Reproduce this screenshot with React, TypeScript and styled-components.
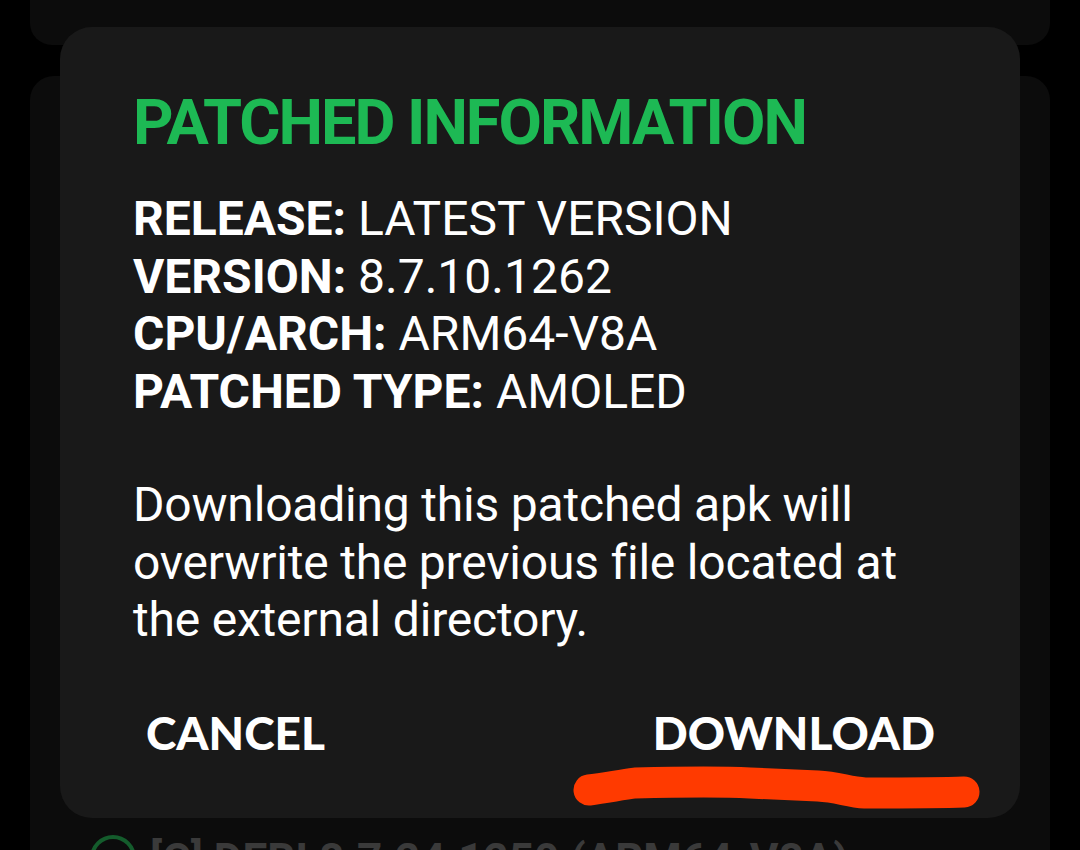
import React from "react";
import styled, { createGlobalStyle } from "styled-components";

const Global = createGlobalStyle`
  html, body { margin: 0; padding: 0; background: #000; }
  body { font-family: Roboto, "Noto Sans", sans-serif; }
`;

const Page = styled.div`
  position: relative;
  width: 1080px;
  height: 850px;
  overflow: hidden;
  background: #000;
  display: flex;
  flex-direction: column;
  gap: 31px;
  padding: 0 30px;
  box-sizing: border-box;
`;

const TopCard = styled.div`
  height: 45px;
  flex: none;
  background: #0c0c0c;
  border-radius: 0 0 22px 22px;
`;

const ListCard = styled.div`
  flex: 1;
  background: #0c0c0c;
  border-radius: 24px 24px 0 0;
  padding: 759px 0 0 60px;
`;

const ListRow = styled.div`
  display: flex;
  align-items: flex-start;
  gap: 14px;
`;

const RingIcon = styled.div`
  width: 38px;
  height: 38px;
  border: 4px solid #145c2c;
  border-radius: 50%;
  flex: none;
`;

const ListText = styled.div`
  font-family: Roboto, sans-serif;
  font-weight: 700;
  font-size: 44px;
  line-height: 1;
  color: #3a3a3a;
  margin-top: 3px;
  white-space: nowrap;
`;

const Dialog = styled.div`
  position: absolute;
  left: 60px;
  top: 27px;
  width: 960px;
  height: 791px;
  box-sizing: border-box;
  background: #191919;
  border-radius: 32px;
  padding: 65px 85px 0 73px;
  display: flex;
  flex-direction: column;
`;

const Title = styled.h1`
  margin: 0 0 36px;
  font-family: Roboto, sans-serif;
  font-weight: 700;
  font-size: 63px;
  line-height: 62px;
  letter-spacing: -2px;
  color: #1db954;
  white-space: nowrap;
`;

const InfoList = styled.div`
  display: flex;
  flex-direction: column;
`;

const InfoLine = styled.div`
  font-family: Roboto, sans-serif;
  font-size: 48px;
  line-height: 57.5px;
  color: #fff;
  white-space: nowrap;
`;

const Label = styled.span`
  font-weight: 700;
`;

const Value = styled.span`
  font-weight: 400;
`;

const Message = styled.p`
  margin: 56px 0 0;
  font-family: Roboto, sans-serif;
  font-size: 48px;
  line-height: 57.5px;
  letter-spacing: -0.2px;
  color: #fff;
  font-weight: 400;
`;

const Actions = styled.div`
  margin-top: 61px;
  padding-left: 13px;
  display: flex;
  justify-content: space-between;
  align-items: center;
`;

const ActionButton = styled.button`
  background: none;
  border: none;
  padding: 0;
  font-family: Lato, sans-serif;
  font-weight: 900;
  font-size: 46px;
  line-height: 46px;
  letter-spacing: 0;
  color: #fff;
  cursor: pointer;
`;

const Scribble = styled.svg`
  position: absolute;
  left: 560px;
  top: 755px;
  width: 440px;
  height: 70px;
  pointer-events: none;
`;

export default function App() {
  return (
    <>
      <Global />
      <Page>
        <TopCard />
        <ListCard>
          <ListRow>
            <RingIcon />
            <ListText>[C] DEBI 8.7.24.1250 (ARM64-V8A)</ListText>
          </ListRow>
        </ListCard>
        <Dialog>
          <Title>PATCHED INFORMATION</Title>
          <InfoList>
            <InfoLine>
              <Label>RELEASE:</Label> <Value>LATEST VERSION</Value>
            </InfoLine>
            <InfoLine>
              <Label>VERSION:</Label> <Value>8.7.10.1262</Value>
            </InfoLine>
            <InfoLine>
              <Label>CPU/ARCH:</Label> <Value>ARM64-V8A</Value>
            </InfoLine>
            <InfoLine>
              <Label>PATCHED TYPE:</Label> <Value>AMOLED</Value>
            </InfoLine>
          </InfoList>
          <Message>
            Downloading this patched apk will overwrite the previous file located at the external directory.
          </Message>
          <Actions>
            <ActionButton>CANCEL</ActionButton>
            <ActionButton>DOWNLOAD</ActionButton>
          </Actions>
        </Dialog>
        <Scribble viewBox="0 0 440 70">
          <path
            d="M29 35 C 45 33, 60 30, 75 28 C 120 27, 170 27, 190 28 C 215 29, 240 30, 258 31 C 278 32, 288 37, 305 38 C 340 38, 380 38, 404 37"
            fill="none"
            stroke="#ff3a00"
            strokeWidth="31"
            strokeLinecap="round"
            strokeLinejoin="round"
          />
        </Scribble>
      </Page>
    </>
  );
}
